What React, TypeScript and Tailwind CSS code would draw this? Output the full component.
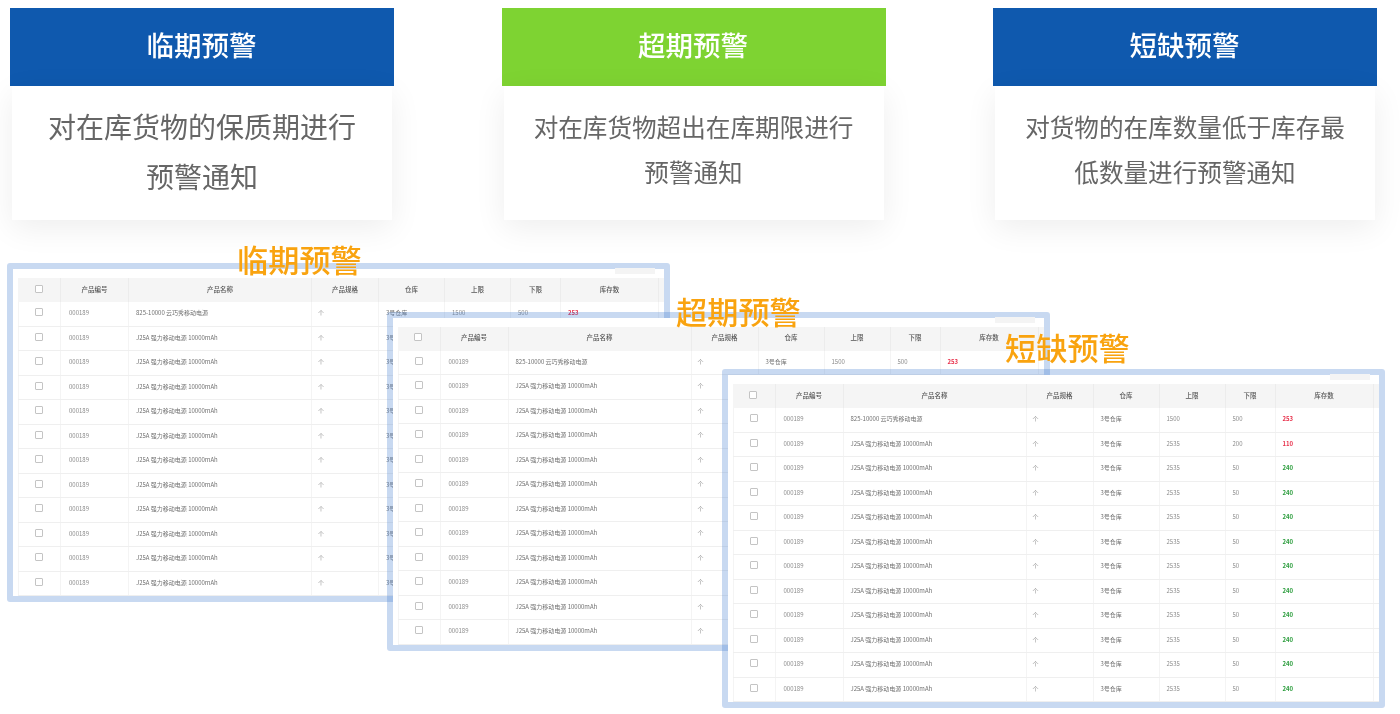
const cards = [
  {
    title: "临期预警",
    head: "bg-[#0f59ae]",
    body: "text-[28px] leading-[50px] pt-[15px] px-[20px]",
    lines: ["对在库货物的保质期进行", "预警通知"],
  },
  {
    title: "超期预警",
    head: "bg-[#7ed332]",
    body: "text-[24.6px] leading-[45px] pt-[18px] px-[10px]",
    lines: ["对在库货物超出在库期限进行", "预警通知"],
  },
  {
    title: "短缺预警",
    head: "bg-[#0f59ae]",
    body: "text-[24.6px] leading-[45px] pt-[18px] px-[10px]",
    lines: ["对货物的在库数量低于库存最", "低数量进行预警通知"],
  },
];

const COLS = "grid grid-cols-[43px_68px_183px_67px_66px_66px_50px_98px]";
const HEADERS = ["产品编号", "产品名称", "产品规格", "仓库", "上限", "下限", "库存数"];

interface Row {
  name: string;
  upper: string;
  lower: string;
  stock: string;
  color: string;
}

const firstRow: Row = { name: "825-10000 云巧秀移动电源", upper: "1500", lower: "500", stock: "253", color: "text-[#e8344e]" };
const otherRow = (stock = "240", lower = "50", color = "text-[#2e9e3f]"): Row => ({
  name: "J25A 强力移动电源 10000mAh",
  upper: "2535",
  lower,
  stock,
  color,
});

const rows: Row[] = [
  firstRow,
  otherRow("110", "200", "text-[#e8344e]"),
  ...Array.from({ length: 10 }, () => otherRow()),
];

function Checkbox() {
  return <span className="block w-[8px] h-[8px] rounded-[1px] border border-[#c4c4c4] bg-white" />;
}

function Table() {
  return (
    <div className="text-[6px] leading-none blur-[0.35px]">
      <div className={`${COLS} h-[24px] items-center bg-[#f5f5f5] font-medium text-[#555] text-[6.5px]`}>
        <div className="h-full flex items-center justify-center pb-[3px] pr-[1px] border-r border-[#ececec]">
          <Checkbox />
        </div>
        {HEADERS.map((h) => (
          <div key={h} className="h-full flex items-center justify-center pb-[2px] border-r border-[#ececec]">
            {h}
          </div>
        ))}
      </div>
      {rows.map((r, i) => (
        <div key={i} className={`${COLS} h-[24.5px] border-b border-[#efefef] text-[#8c8c8c]`}>
          <div className="flex items-center justify-center pb-[3px] pr-[1px] border-x border-[#f4f4f4]">
            <Checkbox />
          </div>
          <div className="flex items-center pb-[1px] pl-[8px] border-r border-[#f4f4f4]">000189</div>
          <div className="flex items-center pb-[1px] pl-[7px] border-r border-[#f4f4f4] text-[#707070]">{r.name}</div>
          <div className="flex items-center pb-[1px] pl-[6px] border-r border-[#f4f4f4]">个</div>
          <div className="flex items-center pb-[1px] pl-[7px] border-r border-[#f4f4f4] text-[#707070]">3号仓库</div>
          <div className="flex items-center pb-[1px] pl-[7px] border-r border-[#f4f4f4]">{r.upper}</div>
          <div className="flex items-center pb-[1px] pl-[7px] border-r border-[#f4f4f4]">{r.lower}</div>
          <div className={`flex items-center pb-[1px] pl-[7px] border-r border-[#f4f4f4] font-bold ${r.color}`}>{r.stock}</div>
        </div>
      ))}
    </div>
  );
}

function TableWindow({ pos }: { pos: string }) {
  return (
    <div className={`absolute w-[663px] h-[339px] ${pos} rounded-[3px] border-[6px] border-[#4880d0]/30 bg-white bg-clip-padding pt-[9px] pl-[5px]`}>
      <div className="absolute right-[9px] top-[-1px] w-[40px] h-[6px] bg-[#f4f4f4]" />
      <Table />
    </div>
  );
}

function Label({ text, pos }: { text: string; pos: string }) {
  return (
    <div className={`absolute ${pos} text-[31.2px] leading-[36px] font-medium text-[#f9a30f] whitespace-nowrap`}>
      {text}
    </div>
  );
}

export default function App() {
  return (
    <div className="w-[1400px] h-[714px] overflow-hidden bg-white blur-[0.5px] font-['Noto_Sans_CJK_SC','Liberation_Sans',sans-serif]">
      <div className="flex gap-[107.5px] pl-[10px] pt-[8px]">
        {cards.map((c) => (
          <div key={c.title} className="w-[384px]">
            <div className={`h-[78px] flex items-center justify-center pb-[4px] pr-[1px] text-[27.5px] font-medium text-white ${c.head}`}>
              {c.title}
            </div>
            <div className={`mx-[2px] h-[134px] bg-white text-center text-[#666] shadow-[0_8px_30px_rgba(0,0,0,0.07)] ${c.body}`}>
              {c.lines.map((l) => (
                <div key={l}>{l}</div>
              ))}
            </div>
          </div>
        ))}
      </div>

      <div className="relative h-[492px]">
        <TableWindow pos="left-[7px] top-[43px]" />
        <Label text="临期预警" pos="left-[237px] top-[21px]" />
        <TableWindow pos="left-[386.5px] top-[91.5px]" />
        <Label text="超期预警" pos="left-[676px] top-[73px]" />
        <TableWindow pos="left-[721.5px] top-[149px]" />
        <Label text="短缺预警" pos="left-[1005px] top-[109px]" />
      </div>
    </div>
  );
}
